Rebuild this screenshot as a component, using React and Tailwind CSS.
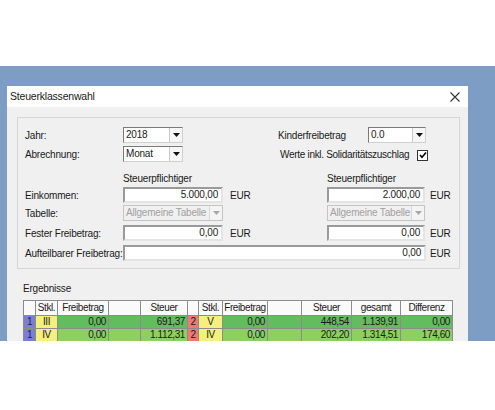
import React from "react";

const F = { fontFamily: '"Liberation Sans", Arial, sans-serif' };

function Arrow({ disabled }) {
  return (
    <div className={`w-[13px] h-full flex items-center justify-center border-l ${disabled ? "border-[#d8d8d8] bg-[#f4f4f4]" : "border-[#c8c8c8] bg-[#f6f6f6]"}`}>
      <svg width="7" height="4" viewBox="0 0 7 4">
        <path d="M0 0 L7 0 L3.5 4 Z" fill={disabled ? "#a8a8a8" : "#111"} />
      </svg>
    </div>
  );
}

function Select({ w, value, disabled }) {
  return (
    <div
      className={`flex h-[16px] items-stretch border ${disabled ? "border-[#c4c4c4] bg-[#f0f0f0]" : "border-t-[#7a7a7a] border-l-[#7a7a7a] border-r-[#d0d0d0] border-b-[#d0d0d0] bg-white"} ${w}`}
    >
      <div className={`flex-1 pl-[2px] leading-[14px] text-[10px] tracking-[-0.2px] whitespace-nowrap overflow-hidden ${disabled ? "text-[#a0a0a0]" : "text-[#1a1a1a]"}`}>{value}</div>
      <Arrow disabled={disabled} />
    </div>
  );
}

function Input({ w, value }) {
  return (
    <div className={`h-[16px] border-2 border-t-[#9a9a9a] border-l-[#9a9a9a] border-r-[#e4e4e4] border-b-[#e4e4e4] bg-white text-right pr-[3px] leading-[12px] text-[10px] tracking-[-0.2px] ${w}`}>
      {value}
    </div>
  );
}

const cols = [12, 22, 51, 32, 47, 11, 24, 45, 34, 50, 49, 52];

function Cell({ i, children, cls = "", align = "text-right", head }) {
  return (
    <div
      className={`border-r border-b border-[#8c8c8c] overflow-hidden whitespace-nowrap tracking-[-0.4px] ${head ? "px-0" : "px-[2px]"} ${align} ${cls}`}
      style={{ width: cols[i] }}
    >
      {children}
    </div>
  );
}

function DataRow({ bg, a, b, c, d, e, f, g, h }) {
  return (
    <div className="flex h-[13px] leading-[12px]">
      <Cell i={0} cls="bg-[#7b80cc] text-[#1a1a60]" align="text-center">1</Cell>
      <Cell i={1} cls="bg-[#f4f07e]" align="text-center">{a}</Cell>
      <Cell i={2} cls={bg}>{b}</Cell>
      <Cell i={3} cls={bg}></Cell>
      <Cell i={4} cls={bg}>{c}</Cell>
      <Cell i={5} cls="bg-[#f07878]" align="text-center">2</Cell>
      <Cell i={6} cls="bg-[#f4f07e]" align="text-center">{d}</Cell>
      <Cell i={7} cls={bg}>{e}</Cell>
      <Cell i={8} cls={bg}></Cell>
      <Cell i={9} cls={bg}>{f}</Cell>
      <Cell i={10} cls={bg}>{g}</Cell>
      <Cell i={11} cls={bg}>{h}</Cell>
    </div>
  );
}

export default function App() {
  const heads = ["", "Stkl.", "Freibetrag", "", "Steuer", "", "Stkl.", "Freibetrag", "", "Steuer", "gesamt", "Differenz"];
  return (
    <div className="w-[495px] h-[410px] bg-white flex flex-col text-[#1a1a1a]" style={F}>
      <div className="h-[66px]" />
      <div className="h-[275px] bg-[#7e9dc4] pl-[7px] pt-[20px] overflow-hidden">
        <div className="w-[461px] h-[300px] bg-[#f0f0f0] flex flex-col">
          <div className="h-[21px] bg-white flex items-center justify-between pl-[3px] pr-[8px]">
            <span className="text-[10.5px] tracking-[-0.2px]">Steuerklassenwahl</span>
            <svg width="10" height="10" viewBox="0 0 10 10">
              <path d="M0.5 0.5 L9.5 9.5 M9.5 0.5 L0.5 9.5" stroke="#333" strokeWidth="1.1" />
            </svg>
          </div>
          <div className="px-[10px] pt-[10px] flex flex-col text-[10px] tracking-[-0.2px]">
            <div className="border border-[#d6d6d6] pl-[7px] pt-[9px] pb-[7px] flex flex-col w-[443px]">
              <div className="flex h-[16px] items-center">
                <div className="w-[98px]">Jahr:</div>
                <Select w="w-[60px]" value="2018" />
                <div className="w-[95px]" />
                <div className="w-[90px]">Kinderfreibetrag</div>
                <Select w="w-[58px]" value="0.0" />
              </div>
              <div className="flex h-[16px] items-center mt-[3px]">
                <div className="w-[98px]">Abrechnung:</div>
                <Select w="w-[60px]" value="Monat" />
                <div className="w-[97px]" />
                <div className="w-[137px] tracking-[-0.3px]">Werte inkl. Solidaritätszuschlag</div>
                <div className="w-[11px] h-[11px] mt-[2px] border border-[#333] bg-white flex items-center justify-center">
                  <svg width="8" height="8" viewBox="0 0 8 8">
                    <path d="M1 4 L3 6.2 L7 1.5" stroke="#000" strokeWidth="1.6" fill="none" />
                  </svg>
                </div>
              </div>
              <div className="flex h-[12px] items-center mt-[10px]">
                <div className="w-[98px]" />
                <div className="w-[204px]">Steuerpflichtiger</div>
                <div>Steuerpflichtiger</div>
              </div>
              <div className="flex h-[16px] items-center mt-[3px]">
                <div className="w-[98px]">Einkommen:</div>
                <Input w="w-[100px]" value="5.000,00" />
                <div className="w-[104px] pl-[7px]">EUR</div>
                <Input w="w-[98px]" value="2.000,00" />
                <div className="pl-[5px]">EUR</div>
              </div>
              <div className="flex h-[16px] items-center mt-[2px]">
                <div className="w-[98px]">Tabelle:</div>
                <Select w="w-[100px]" value="Allgemeine Tabelle" disabled />
                <div className="w-[104px]" />
                <Select w="w-[98px]" value="Allgemeine Tabelle" disabled />
              </div>
              <div className="flex h-[16px] items-center mt-[4px]">
                <div className="w-[98px]">Fester Freibetrag:</div>
                <Input w="w-[100px]" value="0,00" />
                <div className="w-[104px] pl-[7px]">EUR</div>
                <Input w="w-[98px]" value="0,00" />
                <div className="pl-[5px]">EUR</div>
              </div>
              <div className="flex h-[16px] items-center mt-[4px]">
                <div className="w-[98px] whitespace-nowrap">Aufteilbarer Freibetrag:</div>
                <Input w="w-[303px]" value="0,00" />
                <div className="pl-[4px]">EUR</div>
              </div>
            </div>
            <div className="mt-[14px] pl-[6px] h-[12px] leading-[12px]">Ergebnisse</div>
            <div className="mt-[5px] ml-[6px] flex flex-col border-l border-t border-[#8c8c8c] w-max">
              <div className="flex h-[15px] leading-[14px] bg-[#fafafa]">
                {heads.map((h, i) => (
                  <Cell key={i} i={i} align="text-center" head>{h}</Cell>
                ))}
              </div>
              <DataRow bg="bg-[#62bd5e]" a="III" b="0,00" c="691,37" d="V" e="0,00" f="448,54" g="1.139,91" h="0,00" />
              <DataRow bg="bg-[#8fcf62]" a="IV" b="0,00" c="1.112,31" d="IV" e="0,00" f="202,20" g="1.314,51" h="174,60" />
            </div>
          </div>
        </div>
      </div>
      <div className="flex-1 bg-white" />
    </div>
  );
}
